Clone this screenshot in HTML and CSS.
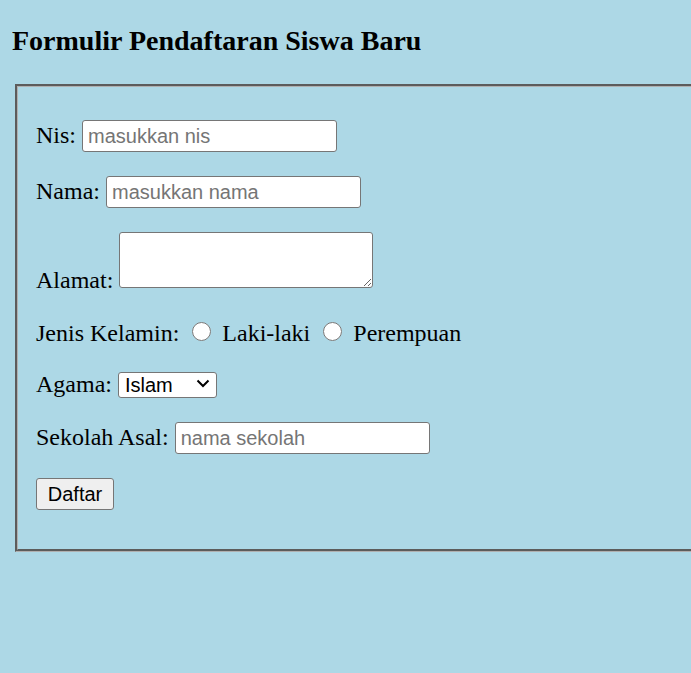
FILE: index.html
```html
<!DOCTYPE html>
<html lang="id">
<head>
<meta charset="utf-8">
<title>Formulir Pendaftaran Siswa Baru</title>
<link rel="stylesheet" href="styles.css">
</head>
<body>
<h3 class="title">Formulir Pendaftaran Siswa Baru</h3>
<form class="form">
  <fieldset class="box">
    <p class="row">Nis: <input class="field" type="text" placeholder="masukkan nis"></p>
    <p class="row">Nama: <input class="field" type="text" placeholder="masukkan nama"></p>
    <p class="row">Alamat: <textarea class="area"></textarea></p>
    <p class="row">Jenis Kelamin: <input class="radio" type="radio" name="jk"> Laki-laki <input class="radio" type="radio" name="jk"> Perempuan</p>
    <p class="row">Agama: <span class="pick-wrap"><select class="pick">
        <option>Islam</option>
        <option>Kristen</option>
        <option>Katolik</option>
        <option>Hindu</option>
        <option>Budha</option>
      </select><svg class="chev" width="14" height="9" viewBox="0 0 14 9"><path d="M1.5 1.5 L7 7 L12.5 1.5" fill="none" stroke="#000" stroke-width="2"/></svg></span></p>
    <p class="row">Sekolah Asal: <input class="field" type="text" placeholder="nama sekolah"></p>
    <p class="row"><button class="btn" type="button">Daftar</button></p>
  </fieldset>
</form>
</body>
</html>
```
FILE: styles.css
```css
body {
  margin: 12px 0 12px 12px;
  background: #add8e6;
  font-family: "Liberation Serif", "Times New Roman", serif;
  font-size: 24px;
  color: #000;
}
.title {
  font-size: 28px;
  font-weight: bold;
  margin: 13px 0 27px;
}
.form {
  margin: 0;
}
.box {
  margin: 0 0 0 3px;
  padding: 9px 18px 15px;
  border: 3px groove #b0b0b0;
  border-right: 0;
}
.row {
  margin: 24px 0;
}
.field {
  box-sizing: border-box;
  width: 255px;
  height: 32px;
  padding: 1px 5px;
  border: 1px solid #767676;
  border-radius: 3px;
  background: #fff;
  font-family: "Liberation Sans", Arial, sans-serif;
  font-size: 20px;
  color: #000;
}
.field::placeholder {
  color: #757575;
}
.area {
  box-sizing: border-box;
  width: 254px;
  height: 56px;
  border: 1px solid #767676;
  border-radius: 3px;
  font-family: "Liberation Mono", monospace;
  font-size: 20px;
}
.radio {
  width: 19px;
  height: 19px;
  margin: 4px 5px 0 7px;
}
.pick-wrap {
  position: relative;
  display: inline-block;
}
.pick {
  appearance: none;
  box-sizing: border-box;
  width: 99px;
  height: 26px;
  padding: 0 6px;
  border: 1px solid #767676;
  border-radius: 3px;
  background: #fff;
  font-family: "Liberation Sans", Arial, sans-serif;
  font-size: 20px;
  color: #000;
}
.chev {
  position: absolute;
  right: 7px;
  top: 8px;
  pointer-events: none;
}
.btn {
  box-sizing: border-box;
  width: 78px;
  height: 32px;
  padding: 1px 9px;
  border: 1px solid #767676;
  border-radius: 3px;
  background: #efefef;
  font-family: "Liberation Sans", Arial, sans-serif;
  font-size: 20px;
  color: #000;
}
```
